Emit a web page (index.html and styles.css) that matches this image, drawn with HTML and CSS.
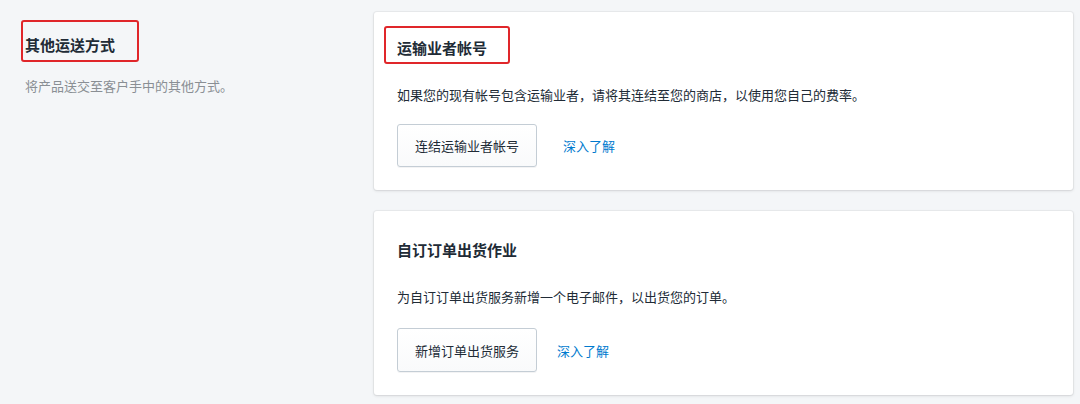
FILE: index.html
```html
<!DOCTYPE html>
<html lang="zh-CN">
<head>
    <meta charset="UTF-8">
    <meta name="viewport" content="width=device-width, initial-scale=1.0">
    <title>其他运送方式</title>
    <link rel="stylesheet" href="styles.css">
</head>
<body>
    <div class="layout">
        <div class="section-info">
            <h2 class="section-title"><span class="mark mark-left">其他运送方式</span></h2>
            <p class="section-desc">将产品送交至客户手中的其他方式。</p>
        </div>
        <div class="section-cards">
            <div class="card">
                <h3 class="card-title"><span class="mark mark-card">运输业者帐号</span></h3>
                <p class="card-text">如果您的现有帐号包含运输业者，请将其连结至您的商店，以使用您自己的费率。</p>
                <div class="actions">
                    <button class="btn">连结运输业者帐号</button>
                    <a class="link" href="#">深入了解</a>
                </div>
            </div>
            <div class="card card-second">
                <h3 class="card-title">自订订单出货作业</h3>
                <p class="card-text">为自订订单出货服务新增一个电子邮件，以出货您的订单。</p>
                <div class="actions">
                    <button class="btn">新增订单出货服务</button>
                    <a class="link" href="#">深入了解</a>
                </div>
            </div>
        </div>
    </div>
</body>
</html>
```

FILE: styles.css
```css
body {
    margin: 0;
    background-color: #f4f6f8;
    font-family: "Noto Sans CJK SC", "Noto Sans", sans-serif;
    color: #212b36;
}
.layout {
    display: grid;
    grid-template-columns: 349px 699px;
    padding: 12px 0 0 25px;
}
.section-info {
    padding-top: 23px;
}
.section-title {
    margin: 0;
    font-size: 15px;
    line-height: 20px;
    font-weight: bold;
}
.section-desc {
    margin: 21px 0 0;
    font-size: 13px;
    line-height: 20px;
    color: #8a8f94;
}
.mark {
    position: relative;
    display: inline-block;
}
/* red annotation boxes */
.mark::after {
    content: "";
    position: absolute;
    border: 2px solid #e0262a;
    border-radius: 3px;
}
.mark-left::after {
    left: -4px;
    right: -24px;
    top: -15px;
    bottom: -7px;
}
.mark-card::after {
    left: -13px;
    right: -23px;
    top: -10px;
    bottom: -4px;
}
.card {
    background-color: #fff;
    border-radius: 3px;
    box-shadow: 0 0 0 1px rgba(63, 63, 68, 0.05), 0 1px 3px 0 rgba(63, 63, 68, 0.15);
    padding: 24px 23px 23px 23px;
    margin-bottom: 21px;
}
.card-title {
    margin: 0;
    font-size: 15px;
    line-height: 24px;
    font-weight: bold;
}
.card-text {
    margin: 25px 0 0;
    font-size: 13px;
    line-height: 20px;
}
.card-second {
    padding-top: 27px;
}
.card-second .actions {
    margin-top: 21px;
    gap: 20px;
}
.card-second .btn {
    height: 44px;
}
.actions {
    display: flex;
    align-items: center;
    gap: 26px;
    margin-top: 19px;
}
.btn {
    height: 43px;
    width: 140px;
    padding: 0;
    font-family: inherit;
    font-size: 13px;
    color: #212b36;
    background: linear-gradient(to bottom, #fff, #f9fafb);
    border: 1px solid #c4cdd5;
    border-radius: 3px;
    box-shadow: 0 1px 0 0 rgba(22, 29, 37, 0.05);
    cursor: pointer;
}
.link {
    font-size: 13px;
    color: #007ace;
    text-decoration: none;
}
```
